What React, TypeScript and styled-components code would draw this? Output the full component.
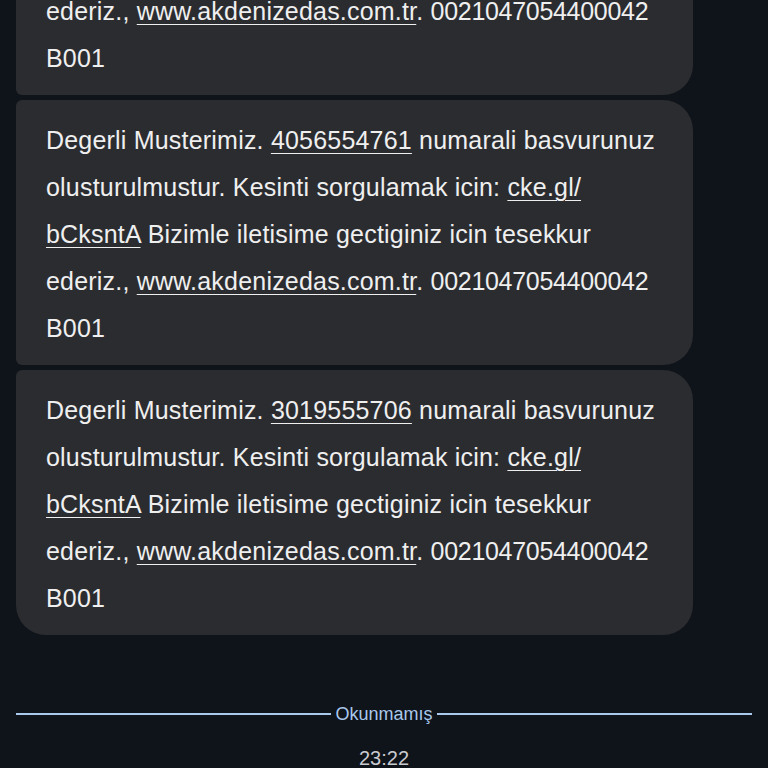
import React from "react";
import styled, { createGlobalStyle } from "styled-components";

const GlobalStyle = createGlobalStyle`
  html, body {
    margin: 0;
    padding: 0;
    background: #0f131a;
    overflow: hidden;
  }
  body {
    font-family: "Liberation Sans", Arial, sans-serif;
  }
`;

type Msg = { id: string; number: string };

const messages: Msg[] = [
  { id: "m1", number: "4056554760" },
  { id: "m2", number: "4056554761" },
  { id: "m3", number: "3019555706" },
];

export default function App() {
  return (
    <>
      <GlobalStyle />
      <Screen>
        <Thread>
          {messages.map((m, i) => (
            <Bubble key={m.id} $first={i === 0} $last={i === messages.length - 1}>
              Degerli Musterimiz. <Link>{m.number}</Link> numarali basvurunuz
              <br />
              olusturulmustur. Kesinti sorgulamak icin: <Link>cke.gl/</Link>
              <br />
              <Link>bCksntA</Link> Bizimle iletisime gectiginiz icin tesekkur
              <br />
              ederiz., <Link>www.akdenizedas.com.tr</Link>.{" "}
              <Digits>0021047054400042</Digits>
              <br />
              B001
            </Bubble>
          ))}
        </Thread>

        <Divider>
          <Line />
          <DividerLabel>Okunmamış</DividerLabel>
          <Line />
        </Divider>

        <Time>23:22</Time>
      </Screen>
    </>
  );
}

const Screen = styled.div`
  display: flex;
  flex-direction: column;
  width: 768px;
  height: 768px;
  overflow: hidden;
`;

const Thread = styled.div`
  display: flex;
  flex-direction: column;
  gap: 5px;
  margin-top: -170px;
  padding-left: 16px;
`;

const Bubble = styled.div<{ $first?: boolean; $last?: boolean }>`
  box-sizing: border-box;
  width: 677px;
  height: 265px;
  padding: 17px 20px 13px 30px;
  background: #2b2c2f;
  color: #efefef;
  font-size: 25px;
  line-height: 47px;
  letter-spacing: 0.2px;
  white-space: nowrap;
  border-radius: ${(p) => (p.$first ? "28px" : "6px")} 30px 30px
    ${(p) => (p.$last ? "30px" : "6px")};
`;

const Link = styled.span`
  text-decoration: underline;
  text-decoration-thickness: 1px;
  text-underline-offset: 4px;
`;

const Digits = styled.span`
  letter-spacing: -0.3px;
`;

const Divider = styled.div`
  display: flex;
  align-items: center;
  gap: 4px;
  padding: 0 16px;
  margin-top: 68px;
`;

const Line = styled.div`
  flex: 1;
  height: 2px;
  background: #a9c8ec;
`;

const DividerLabel = styled.span`
  color: #a9c8ec;
  font-size: 18px;
  line-height: 22px;
`;

const Time = styled.div`
  margin-top: 22px;
  text-align: center;
  color: #c9cbcf;
  font-size: 20px;
`;
